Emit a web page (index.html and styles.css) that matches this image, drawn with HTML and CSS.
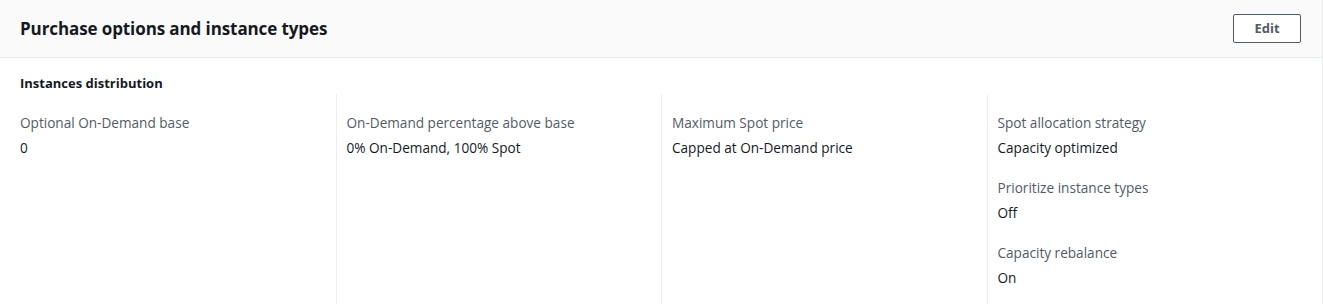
FILE: index.html
```html
<!DOCTYPE html>
<html lang="en">
<head>
    <meta charset="UTF-8">
    <title>Purchase options and instance types</title>
    <link rel="stylesheet" href="styles.css">
</head>
<body>
    <div class="card">
        <div class="card-header">
            <h2>Purchase options and instance types</h2>
            <button class="btn">Edit</button>
        </div>

        <div class="card-body">
            <h3>Instances distribution</h3>
            <div class="columns">
                <div class="column">
                    <div class="field">
                        <div class="label">Optional On-Demand base</div>
                        <div class="value">0</div>
                    </div>
                </div>
                <div class="column">
                    <div class="field">
                        <div class="label">On-Demand percentage above base</div>
                        <div class="value">0% On-Demand, 100% Spot</div>
                    </div>
                </div>
                <div class="column">
                    <div class="field">
                        <div class="label">Maximum Spot price</div>
                        <div class="value">Capped at On-Demand price</div>
                    </div>
                </div>
                <div class="column">
                    <div class="field">
                        <div class="label">Spot allocation strategy</div>
                        <div class="value">Capacity optimized</div>
                    </div>
                    <div class="field">
                        <div class="label">Prioritize instance types</div>
                        <div class="value">Off</div>
                    </div>
                    <div class="field">
                        <div class="label">Capacity rebalance</div>
                        <div class="value">On</div>
                    </div>
                </div>
            </div>
        </div>
    </div>
</body>
</html>
```

FILE: styles.css
```css
* {
    margin: 0;
    padding: 0;
    box-sizing: border-box;
    font-family: 'Open Sans', 'Noto Sans', sans-serif;
}

body {
    background: #ffffff;
    color: #16191f;
    font-size: 14px;
}

.card {
    width: 1323px;
    height: 304px;
    border-right: 1px solid #eaeded;
    overflow: hidden;
}

.card-header {
    height: 58px;
    background: #fafafa;
    border-bottom: 1px solid #eaeded;
    display: flex;
    align-items: center;
    justify-content: space-between;
    padding: 0 21px 0 20px;
}

.card-header h2 {
    font-size: 17px;
    font-weight: 700;
    color: #16191f;
    letter-spacing: -0.1px;
}

.btn {
    width: 68px;
    height: 29px;
    margin-top: -1px;
    background: #ffffff;
    border: 1px solid #545b64;
    border-radius: 2px;
    color: #545b64;
    font-weight: 700;
    font-size: 13px;
    cursor: pointer;
}

.card-body {
    padding: 14px 20px 0 20px;
}

.card-body h3 {
    font-size: 13px;
    font-weight: 700;
    line-height: 22px;
    color: #16191f;
}

.columns {
    display: grid;
    grid-template-columns: repeat(4, 1fr);
    margin: 0 -10px;
}

.column {
    padding: 18px 10px 0 10px;
    height: 220px;
    border-left: 1px solid #eaeded;
}

.column:first-child {
    border-left: none;
}

.field {
    margin-bottom: 18px;
}

.label {
    color: #545b64;
    font-size: 13.6px;
    line-height: 22px;
    margin-bottom: 3px;
}

.value {
    color: #16191f;
    font-size: 13.6px;
    line-height: 22px;
}
```
